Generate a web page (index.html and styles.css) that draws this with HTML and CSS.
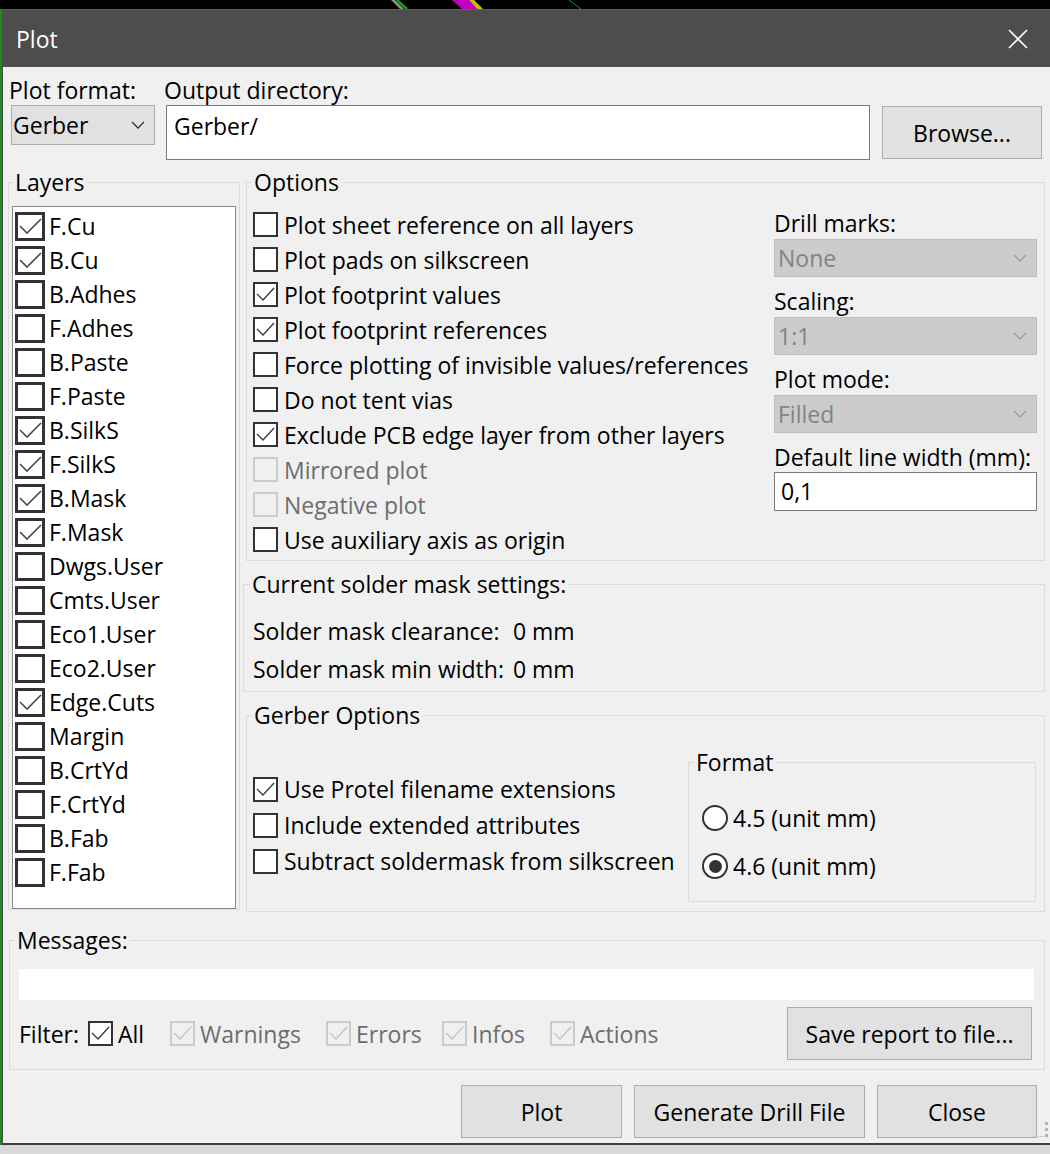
FILE: index.html
```html
<!DOCTYPE html>
<html>
<head>
<meta charset="utf-8">
<title>Plot</title>
<link rel="stylesheet" href="styles.css">
</head>
<body>
<div class="screen">
  <div class="topstrip">
    <svg width="1050" height="9" viewBox="0 0 1050 9">
      <polygon points="391,0 395,0 404,9 400,9" fill="#8a8a8a"/>
      <line x1="397" y1="0" x2="407" y2="9" stroke="#1c9a1c" stroke-width="2.5"/>
      <polygon points="452,0 469,0 477,9 462,9" fill="#c000c0"/>
      <polygon points="469,0 474,0 483,9 477,9" fill="#c8c000"/>
      <line x1="569" y1="0" x2="581" y2="9" stroke="#1c9a1c" stroke-width="1"/>
    </svg>
  </div>
  <div class="main">
    <div class="leftstrip"></div>
    <div class="dialog">
      <div class="titlebar">
        <span class="title">Plot</span>
        <svg class="closex" width="20" height="20" viewBox="0 0 20 20"><path d="M1 1 L19 19 M19 1 L1 19" stroke="#fff" stroke-width="1.6" fill="none"/></svg>
      </div>
      <div class="content">
        <div class="toprow">
          <div class="field fmt">
            <div class="lbl">Plot format:</div>
            <div class="combo">
              <span>Gerber</span>
              <svg class="chev" width="14" height="8" viewBox="0 0 14 8"><path d="M1 1 L7 7 L13 1" stroke="#333" stroke-width="1.3" fill="none"/></svg>
            </div>
          </div>
          <div class="field outdir">
            <div class="lbl">Output directory:</div>
            <div class="textin tall">Gerber/</div>
          </div>
          <div class="btn browse">Browse...</div>
        </div>

        <div class="midrow">
          <fieldset class="group layers">
            <legend>Layers</legend>
            <div class="list">
              <div class="li"><span class="cbl on"><svg viewBox="0 0 24 23"><polyline points="2,11 9,18 23,4"/></svg></span><span>F.Cu</span></div>
              <div class="li"><span class="cbl on"><svg viewBox="0 0 24 23"><polyline points="2,11 9,18 23,4"/></svg></span><span>B.Cu</span></div>
              <div class="li"><span class="cbl"></span><span>B.Adhes</span></div>
              <div class="li"><span class="cbl"></span><span>F.Adhes</span></div>
              <div class="li"><span class="cbl"></span><span>B.Paste</span></div>
              <div class="li"><span class="cbl"></span><span>F.Paste</span></div>
              <div class="li"><span class="cbl on"><svg viewBox="0 0 24 23"><polyline points="2,11 9,18 23,4"/></svg></span><span>B.SilkS</span></div>
              <div class="li"><span class="cbl on"><svg viewBox="0 0 24 23"><polyline points="2,11 9,18 23,4"/></svg></span><span>F.SilkS</span></div>
              <div class="li"><span class="cbl on"><svg viewBox="0 0 24 23"><polyline points="2,11 9,18 23,4"/></svg></span><span>B.Mask</span></div>
              <div class="li"><span class="cbl on"><svg viewBox="0 0 24 23"><polyline points="2,11 9,18 23,4"/></svg></span><span>F.Mask</span></div>
              <div class="li"><span class="cbl"></span><span>Dwgs.User</span></div>
              <div class="li"><span class="cbl"></span><span>Cmts.User</span></div>
              <div class="li"><span class="cbl"></span><span>Eco1.User</span></div>
              <div class="li"><span class="cbl"></span><span>Eco2.User</span></div>
              <div class="li"><span class="cbl on"><svg viewBox="0 0 24 23"><polyline points="2,11 9,18 23,4"/></svg></span><span>Edge.Cuts</span></div>
              <div class="li"><span class="cbl"></span><span>Margin</span></div>
              <div class="li"><span class="cbl"></span><span>B.CrtYd</span></div>
              <div class="li"><span class="cbl"></span><span>F.CrtYd</span></div>
              <div class="li"><span class="cbl"></span><span>B.Fab</span></div>
              <div class="li"><span class="cbl"></span><span>F.Fab</span></div>
            </div>
          </fieldset>

          <div class="rightcol">
            <fieldset class="group options">
              <legend>Options</legend>
              <div class="optbody">
                <div class="optleft">
                  <div class="opt"><span class="cb"></span><span>Plot sheet reference on all layers</span></div>
                  <div class="opt"><span class="cb"></span><span>Plot pads on silkscreen</span></div>
                  <div class="opt"><span class="cb"><svg viewBox="0 0 21 21"><polyline points="2,10 8,16 19,4"/></svg></span><span>Plot footprint values</span></div>
                  <div class="opt"><span class="cb"><svg viewBox="0 0 21 21"><polyline points="2,10 8,16 19,4"/></svg></span><span>Plot footprint references</span></div>
                  <div class="opt"><span class="cb"></span><span>Force plotting of invisible values/references</span></div>
                  <div class="opt"><span class="cb"></span><span>Do not tent vias</span></div>
                  <div class="opt"><span class="cb"><svg viewBox="0 0 21 21"><polyline points="2,10 8,16 19,4"/></svg></span><span>Exclude PCB edge layer from other layers</span></div>
                  <div class="opt dis"><span class="cb"></span><span>Mirrored plot</span></div>
                  <div class="opt dis"><span class="cb"></span><span>Negative plot</span></div>
                  <div class="opt"><span class="cb"></span><span>Use auxiliary axis as origin</span></div>
                </div>
                <div class="optright">
                  <div class="lbl">Drill marks:</div>
                  <div class="combo dcombo"><span>None</span><svg class="chev" width="14" height="8" viewBox="0 0 14 8"><path d="M1 1 L7 7 L13 1" stroke="#9c9c9c" stroke-width="1.3" fill="none"/></svg></div>
                  <div class="lbl">Scaling:</div>
                  <div class="combo dcombo"><span>1:1</span><svg class="chev" width="14" height="8" viewBox="0 0 14 8"><path d="M1 1 L7 7 L13 1" stroke="#9c9c9c" stroke-width="1.3" fill="none"/></svg></div>
                  <div class="lbl">Plot mode:</div>
                  <div class="combo dcombo"><span>Filled</span><svg class="chev" width="14" height="8" viewBox="0 0 14 8"><path d="M1 1 L7 7 L13 1" stroke="#9c9c9c" stroke-width="1.3" fill="none"/></svg></div>
                  <div class="lbl">Default line width (mm):</div>
                  <div class="textin small">0,1</div>
                </div>
              </div>
            </fieldset>

            <fieldset class="group mask">
              <legend>Current solder mask settings:</legend>
              <div class="maskbody">
                <span>Solder mask clearance:</span><span>0 mm</span>
                <span>Solder mask min width:</span><span>0 mm</span>
              </div>
            </fieldset>

            <fieldset class="group gerber">
              <legend>Gerber Options</legend>
              <div class="gerbbody">
                <div class="gerbleft">
                  <div class="opt g"><span class="cb"><svg viewBox="0 0 21 21"><polyline points="2,10 8,16 19,4"/></svg></span><span>Use Protel filename extensions</span></div>
                  <div class="opt g"><span class="cb"></span><span>Include extended attributes</span></div>
                  <div class="opt g"><span class="cb"></span><span>Subtract soldermask from silkscreen</span></div>
                </div>
                <fieldset class="group format">
                  <legend>Format</legend>
                  <div class="fmtbody">
                    <div class="radio"><span class="rb"></span><span>4.5 (unit mm)</span></div>
                    <div class="radio"><span class="rb sel"><span class="dot"></span></span><span>4.6 (unit mm)</span></div>
                  </div>
                </fieldset>
              </div>
            </fieldset>
          </div>
        </div>

        <fieldset class="group messages">
          <legend>Messages:</legend>
          <div class="msgbody">
            <div class="msgbox"></div>
            <div class="filterrow">
              <span class="flabel">Filter:</span>
              <div class="fitem w-all"><span class="cb"><svg viewBox="0 0 21 21"><polyline points="2,10 8,16 19,4"/></svg></span><span>All</span></div>
              <div class="fitem dis w-warn"><span class="cb"><svg viewBox="0 0 21 21"><polyline points="2,10 8,16 19,4"/></svg></span><span>Warnings</span></div>
              <div class="fitem dis w-err"><span class="cb"><svg viewBox="0 0 21 21"><polyline points="2,10 8,16 19,4"/></svg></span><span>Errors</span></div>
              <div class="fitem dis w-info"><span class="cb"><svg viewBox="0 0 21 21"><polyline points="2,10 8,16 19,4"/></svg></span><span>Infos</span></div>
              <div class="fitem dis"><span class="cb"><svg viewBox="0 0 21 21"><polyline points="2,10 8,16 19,4"/></svg></span><span>Actions</span></div>
              <div class="btn savebtn">Save report to file...</div>
            </div>
          </div>
        </fieldset>

        <div class="btnrow">
          <div class="btn b-plot">Plot</div>
          <div class="btn b-drill">Generate Drill File</div>
          <div class="btn b-close">Close</div>
        </div>
      </div>
      <svg class="grip" width="22" height="20" viewBox="0 0 22 20">
        <rect x="17" y="2" width="3" height="3" fill="#b4b4b4"/>
        <rect x="17" y="8" width="3" height="3" fill="#b4b4b4"/>
        <rect x="17" y="14" width="3" height="3" fill="#b4b4b4"/>
        <rect x="5" y="16" width="5" height="1" fill="#c8c8c8"/>
        <rect x="11" y="16" width="5" height="1" fill="#c8c8c8"/>
      </svg>
    </div>
  </div>
</div>
</body>
</html>
```

FILE: styles.css
```css
* { box-sizing: border-box; }
html, body { margin: 0; padding: 0; }
body {
  background: #d9d9d9;
  font-family: "Open Sans", "Noto Sans", sans-serif;
  font-size: 23px;
  color: #000;
  width: 1050px;
  height: 1154px;
  overflow: hidden;
}
.screen { display: flex; flex-direction: column; height: 1154px; }
.topstrip { height: 9px; background: #000; flex: none; overflow: hidden; }
.topstrip svg { display: block; }
.main { display: flex; flex: none; height: 1136px; }
.leftstrip { width: 2px; background: #1d8a1d; flex: none; }
.dialog {
  flex: 1;
  display: flex;
  flex-direction: column;
  background: #f0f0f0;
  border-left: 1px solid #4a4a4a;
  border-bottom: 2px solid #3f3f3f;
  position: relative;
  min-width: 0;
}
.titlebar {
  height: 58px;
  flex: none;
  background: #4d4d4d;
  border-top: 1px solid #5f5f5f;
  display: flex;
  align-items: center;
  justify-content: space-between;
  padding: 0 22px 0 13px;
  color: #fff;
  font-size: 23px;
}
.title { line-height: 28px; }
.closex { display: block; margin-top: 1px; }

.content { padding: 0 0 0 5px; display: flex; flex-direction: column; }

/* top row */
.toprow { display: flex; align-items: flex-start; margin-top: 10px; height: 83px; }
.lbl { line-height: 26px; height: 26px; white-space: nowrap; }
.field .lbl { margin-left: -2px; }
.fmt { margin-left: 3px; width: 144px; }
.outdir { margin-left: 11px; width: 704px; }
.combo {
  margin-top: 2px;
  height: 40px;
  background: #e1e1e1;
  border: 1px solid #adadad;
  display: flex;
  align-items: center;
  padding: 0 9px 0 1px;
  line-height: 28px;
}
.combo .chev { margin-left: auto; display: block; }
.textin {
  background: #fff;
  border: 1px solid #7a7a7a;
  line-height: 28px;
}
.textin.tall { margin-top: 2px; height: 55px; padding: 6px 7px; }
.btn {
  background: #e1e1e1;
  border: 1px solid #adadad;
  display: flex;
  align-items: center;
  justify-content: center;
  height: 53px;
  white-space: nowrap;
}
.browse { margin-left: 12px; width: 160px; margin-top: 29px; }

/* groups */
.group { border: 1px solid #dcdcdc; margin: 0; padding: 0; min-width: 0; }
.group > legend { padding: 0 2px; margin-left: 5px; line-height: 28px; height: 28px; white-space: nowrap; }

.midrow { display: flex; align-items: flex-start; margin-top: 8px; }
.layers { width: 232px; flex: none; }
.layers > legend { margin-left: 4px; }
.list {
  margin: 10px 3px 0 3px;
  height: 703px;
  background: #fff;
  border: 1px solid #828790;
  padding: 2px 0 0 2px;
}
.li { display: flex; align-items: center; height: 34px; }
.li > span:last-child { margin-left: 4px; line-height: 28px; }
.cbl {
  width: 30px;
  height: 29px;
  border: 3px solid #333;
  background: #fff;
  flex: none;
  display: block;
}
.cbl svg { display: block; width: 24px; height: 23px; }
.cbl polyline { fill: none; stroke: #4a4a4a; stroke-width: 1.6; }

.rightcol { margin-left: 6px; width: 799px; flex: none; display: flex; flex-direction: column; }
.optbody { display: flex; padding: 11px 7px 3px 6px; }
.optleft { flex: 1; }
.opt { display: flex; align-items: center; height: 35px; white-space: nowrap; }
.opt > span:last-child { margin-left: 6px; line-height: 28px; }
.cb {
  width: 25px;
  height: 25px;
  border: 2px solid #333;
  background: #fff;
  flex: none;
  display: block;
}
.cb svg { display: block; width: 21px; height: 21px; }
.cb polyline { fill: none; stroke: #3c3c3c; stroke-width: 1.4; }
.dis { color: #6d6d6d; }
.dis .cb { border-color: #cccccc; background: #f0f0f0; }
.dis .cb polyline { stroke: #c4c4c4; }

.optright { width: 263px; flex: none; padding-top: 2px; }
.optright .lbl { height: 28px; line-height: 28px; }
.dcombo {
  height: 38px;
  margin-top: 2px;
  margin-bottom: 10px;
  background: #cccccc;
  border-color: #bfbfbf;
  color: #838383;
  padding: 0 9px 0 3px;
}
.textin.small { height: 39px; margin-top: 1px; padding: 4px 6px; }

.mask { margin-top: 9px; margin-left: -3px; width: 802px; }
.mask > legend { margin-left: 6px; }
.maskbody {
  display: grid;
  grid-template-columns: max-content max-content;
  column-gap: 9px;
  padding: 14px 0 3px 9px;
  line-height: 38px;
}

.gerber { margin-top: 9px; }
.gerbbody { display: flex; align-items: center; padding: 19px 8px 9px 6px; }
.gerbleft { flex: 1; }
.opt.g { height: 36px; }
.format { width: 348px; flex: none; }
.fmtbody { padding: 24px 0 17px 13px; }
.radio { display: flex; align-items: center; height: 36px; }
.radio + .radio { margin-top: 12px; }
.radio > span:last-child { margin-left: 5px; line-height: 28px; }
.rb {
  width: 26px;
  height: 26px;
  border: 2px solid #333;
  border-radius: 50%;
  background: #fff;
  display: flex;
  align-items: center;
  justify-content: center;
  flex: none;
}
.rb .dot { width: 13px; height: 13px; border-radius: 50%; background: #333; display: block; }

/* messages */
.messages { margin-top: 14px; margin-left: 1px; width: 1036px; }
.msgbody { padding: 15px 10px 9px 9px; }
.msgbox { height: 31px; background: #fff; }
.filterrow { display: flex; align-items: center; margin-top: 7px; height: 53px; }
.flabel { width: 69px; flex: none; }
.fitem { display: flex; align-items: center; flex: none; }
.fitem > span:last-child { margin-left: 5px; line-height: 28px; }
.w-all { width: 82px; }
.w-warn { width: 156px; }
.w-err { width: 116px; }
.w-info { width: 108px; }
.savebtn { margin-left: auto; width: 245px; margin-right: 2px; }

.btnrow { display: flex; justify-content: flex-end; margin-top: 15px; padding-right: 13px; }
.b-plot { width: 161px; }
.b-drill { width: 231px; margin-left: 12px; }
.b-close { width: 160px; margin-left: 12px; }

.grip { position: absolute; right: 0; bottom: 3px; display: block; }
```
